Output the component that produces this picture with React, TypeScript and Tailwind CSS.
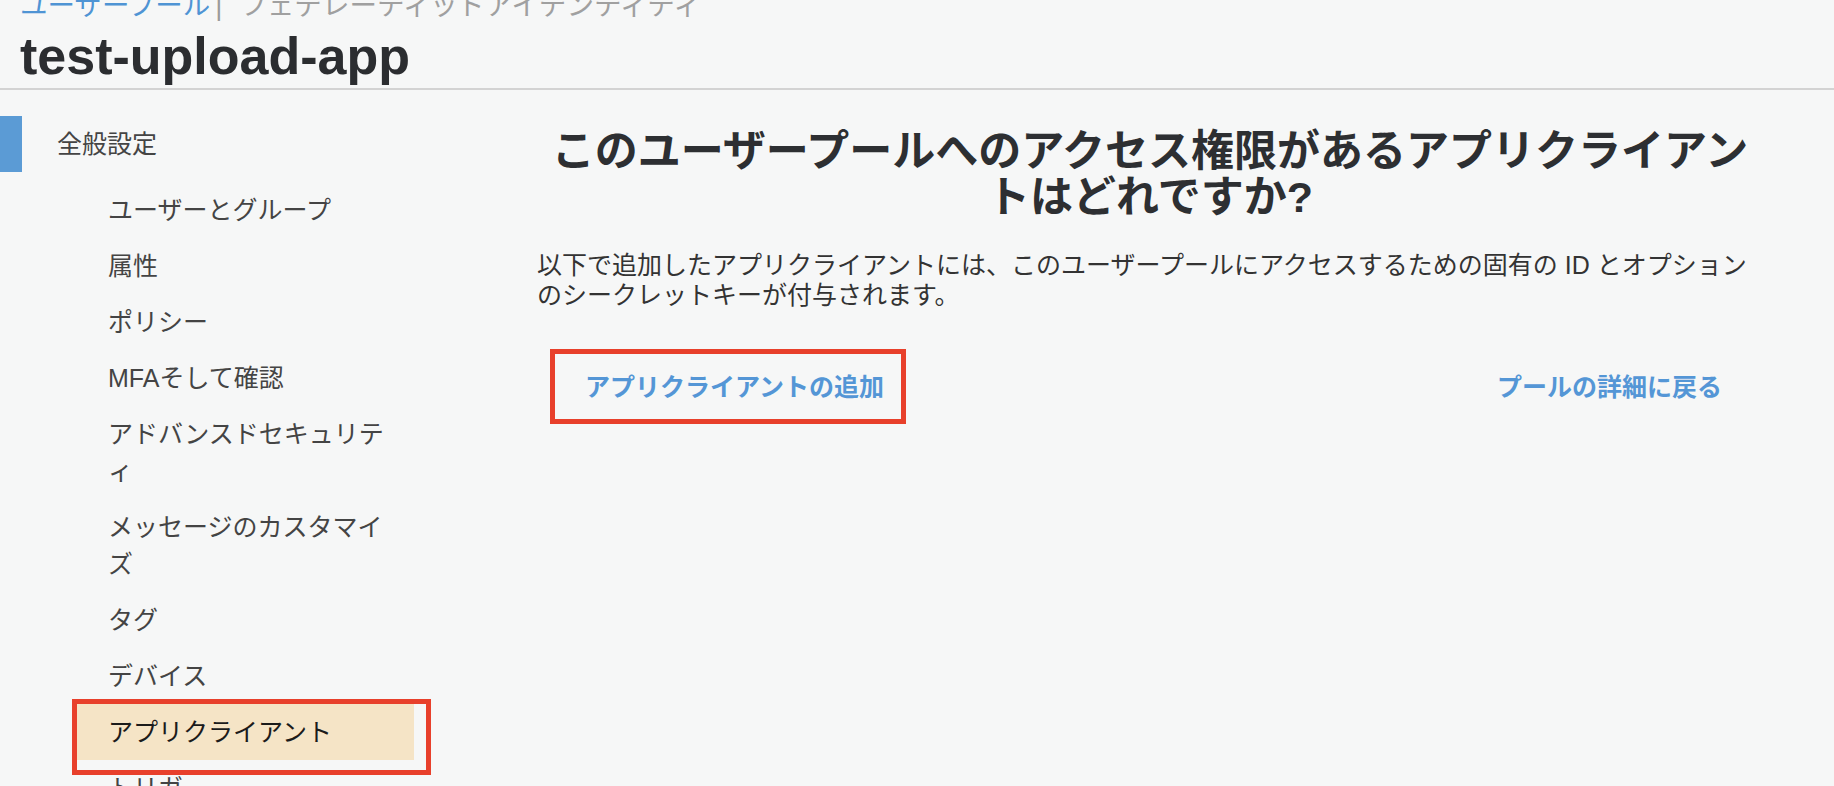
import React from "react";

const items = [
  "ユーザーとグループ",
  "属性",
  "ポリシー",
  "MFAそして確認",
  "アドバンスドセキュリティ",
  "メッセージのカスタマイズ",
  "タグ",
  "デバイス",
  "アプリクライアント",
  "トリガー",
  "分析",
];

export default function App() {
  return (
    <div
      lang="ja"
      className="h-[786px] w-full overflow-hidden bg-[#f6f7f7] font-['Liberation_Sans','Noto_Sans_CJK_JP',sans-serif]"
    >
      <header className="flex flex-col border-b-2 border-[#d3d3d3] pb-[4px] pl-[20px]">
        <div className="-mt-[8px] flex h-[28px] items-center whitespace-nowrap text-[27.5px] leading-[28px]">
          <span className="text-[#4f94d4]">ユーザープール</span>
          <span className="ml-[5px] text-[#9b9b9b]">|</span>
          <span className="ml-[17px] text-[#a0a0a0]">フェデレーティッドアイデンティティ</span>
        </div>
        <h1 className="mt-[8px] text-[52px] font-bold leading-[56px] text-[#2b2d30]">test-upload-app</h1>
      </header>

      <div className="flex">
        <nav className="w-[414px] shrink-0 pt-[26px]">
          <div className="flex h-[56px] items-center">
            <div className="h-full w-[22px] bg-[#5b9bd5]" />
            <span className="ml-[35px] text-[25px] leading-[37px] text-[#444]">全般設定</span>
          </div>
          <ul className="ml-[77px] mt-[10px] w-[337px]">
            {items.map((it) => {
              const active = it === "アプリクライアント";
              return (
                <li
                  key={it}
                  className={
                    active
                      ? "relative bg-[#f5e4c6] py-[9.5px] pl-[31px] pr-[20px] text-[25px] leading-[37px] text-[#1b1b1b] [line-break:loose]"
                      : "relative py-[9.5px] pl-[31px] pr-[20px] text-[25px] leading-[37px] text-[#444] [line-break:loose]"
                  }
                >
                  {it}
                  {active && (
                    <span className="pointer-events-none absolute -left-[5px] -top-[5px] h-[76px] w-[359px] border-[5px] border-[#e8402b]" />
                  )}
                </li>
              );
            })}
          </ul>
        </nav>

        <main className="flex-1 pl-[123px] pr-[71px] pt-[38px]">
          <h2 className="text-center text-[43px] font-bold leading-[46px] text-[#2d2f32]">
            このユーザープールへのアクセス権限があるアプリクライアントはどれですか?
          </h2>
          <p className="mt-[30px] text-[25px] leading-[30px] text-[#333]">
            以下で追加したアプリクライアントには、このユーザープールにアクセスするための固有の ID とオプションのシークレットキーが付与されます。
          </p>
          <div className="mt-[39px] flex items-center justify-between">
            <button className="ml-[13px] h-[75px] border-[5px] border-[#e8402b] pl-[30px] pr-[17px] text-[25px] font-bold leading-[30px] text-[#5496d6]">
              アプリクライアントの追加
            </button>
            <button className="mr-[41px] text-[25px] font-bold leading-[30px] text-[#5496d6]">
              プールの詳細に戻る
            </button>
          </div>
        </main>
      </div>
    </div>
  );
}
